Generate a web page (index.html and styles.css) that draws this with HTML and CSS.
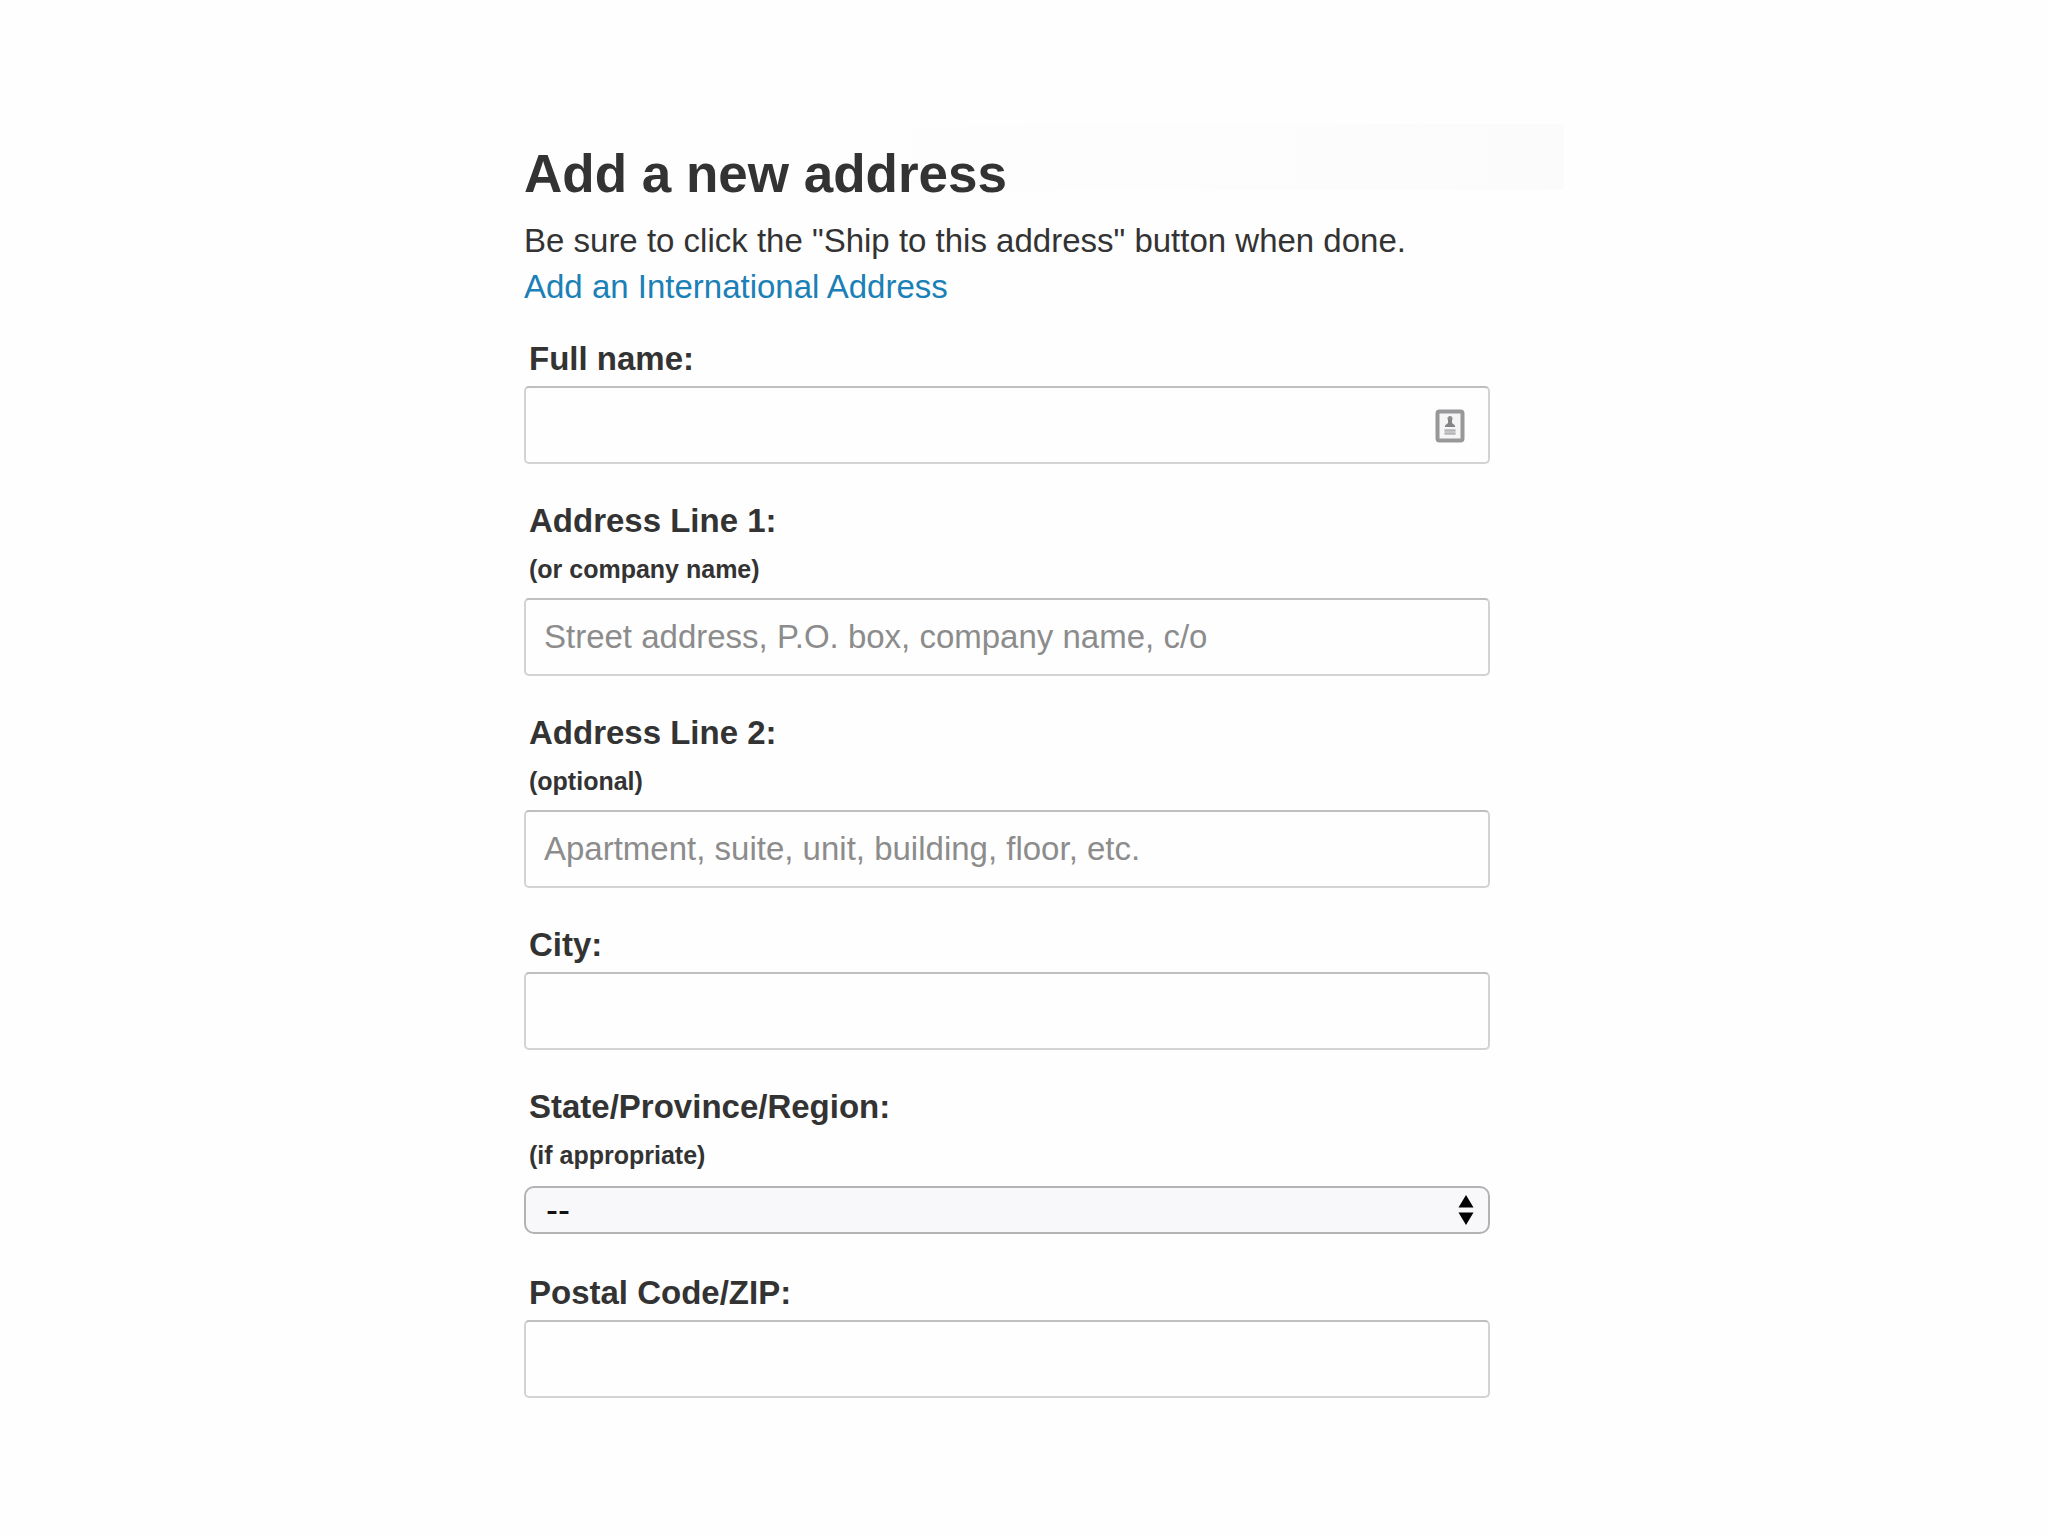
FILE: index.html
```html
<!DOCTYPE html>
<html lang="en">
<head>
<meta charset="utf-8">
<meta name="viewport" content="width=device-width, initial-scale=1">
<title>Add a new address</title>
<link rel="stylesheet" href="styles.css">
</head>
<body>
<main class="panel">
  <h1 class="title">Add a new address</h1>
  <p class="intro">Be sure to click the "Ship to this address" button when done.<br><a class="link" href="#international">Add an International Address</a></p>
  <form class="form">
    <div class="field">
      <label class="label" for="name">Full name:</label>
      <div class="control">
        <input class="input" id="name" type="text">
        <svg class="contact-icon" viewBox="0 0 30 34" aria-hidden="true">
          <rect x="2.500" y="2.500" width="25" height="29" rx="2" fill="#f5f5f6" stroke="#98989a" stroke-width="4"/>
          <circle cx="15" cy="9.500" r="2.500" fill="#8e8e91"/>
          <path d="M13 10h4v4l3 2.500V18H10v-1.500l3-2.500z" fill="#858588"/>
          <path d="M9.500 20h11v6h-11z" fill="#c4c4c7"/>
          <path d="M9.500 21.500h11M9.500 24.500h11" stroke="#b4b4b7"/>
        </svg>
      </div>
    </div>
    <div class="field">
      <label class="label" for="line1">Address Line 1:<span class="hint">(or company name)</span></label>
      <input class="input" id="line1" type="text" placeholder="Street address, P.O. box, company name, c/o">
    </div>
    <div class="field">
      <label class="label" for="line2">Address Line 2:<span class="hint">(optional)</span></label>
      <input class="input" id="line2" type="text" placeholder="Apartment, suite, unit, building, floor, etc.">
    </div>
    <div class="field">
      <label class="label" for="city">City:</label>
      <input class="input" id="city" type="text">
    </div>
    <div class="field">
      <label class="label" for="state">State/Province/Region:<span class="hint">(if appropriate)</span></label>
      <div class="control control-select">
        <select class="select" id="state"><option>--</option></select>
        <svg class="select-arrows" viewBox="0 0 16 30" aria-hidden="true">
          <path d="M8 0l7.500 12.500H.5zM8 30L.5 17.500h15z" fill="#000"/>
        </svg>
      </div>
    </div>
    <div class="field">
      <label class="label" for="zip">Postal Code/ZIP:</label>
      <input class="input" id="zip" type="text">
    </div>
  </form>
</main>
</body>
</html>
```
FILE: styles.css
```css
* {
  box-sizing: border-box;
}

body {
  margin: 0;
  background: #fefefe;
  color: #333;
  font-family: "Liberation Sans", Arial, sans-serif;
  font-size: 33px;
  line-height: 46px;
}

.panel {
  max-width: 1080px;
  margin: 124px auto;
  padding: 20px 74px 14px 40px;
  background: linear-gradient(to right, #fefefe 30%, #fbfbfb) top / 100% 66px no-repeat;
}

.title {
  margin: 0 0 14px;
  font-size: 53px;
  line-height: 60px;
}

.intro {
  margin: 0 0 26px;
}

.link {
  color: #1a80b6;
  text-decoration: none;
}

.form {
  display: flex;
  flex-direction: column;
  gap: 34px;
}

.field {
  display: flex;
  flex-direction: column;
  gap: 4px;
}

.label {
  padding-left: 5px;
  font-weight: bold;
}

.hint {
  display: block;
  font-size: 25px;
  line-height: 50px;
}

.control {
  position: relative;
  display: flex;
}

.control-select {
  margin: 2px 0;
}

.input,
.select {
  width: 100%;
  margin: 0;
  font: inherit;
}

.input {
  height: 78px;
  padding: 0 18px;
  border: 2px solid #d3d3d6;
  border-top-color: #bfbfc2;
  border-radius: 5px;
  background: #fefefe;
  color: #333;
}

.input::placeholder {
  color: #8c8c8c;
  opacity: 1;
}

.select {
  height: 48px;
  padding: 0 50px 0 20px;
  border: 2px solid #b3b2b5;
  border-radius: 10px;
  background: #f8f7fa;
  color: #111;
  font-size: 36px;
  line-height: 44px;
  appearance: none;
}

.contact-icon {
  position: absolute;
  top: 23px;
  right: 25px;
  width: 30px;
  height: 34px;
}

.select-arrows {
  position: absolute;
  top: 9px;
  right: 16px;
  width: 16px;
  height: 30px;
  pointer-events: none;
}
```
